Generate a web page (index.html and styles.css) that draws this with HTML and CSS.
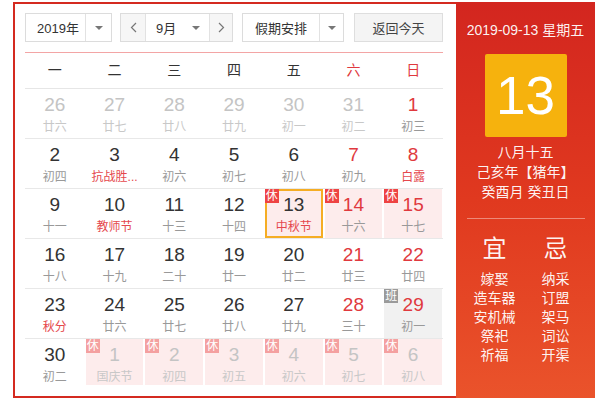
FILE: index.html
```html
<!DOCTYPE html>
<html lang="zh">
<head>
<meta charset="utf-8">
<link rel="stylesheet" href="styles.css">
</head>
<body>
<div class="cal">
  <div class="main">
    <div class="toolbar">
      <div class="sel year"><span class="txt">2019年</span><span class="drop"><i class="tri"></i></span></div>
      <div class="sel month">
        <span class="nav prev"><svg width="7" height="11" viewBox="0 0 7 11"><polyline points="6,1 1.5,5.5 6,10" fill="none" stroke="#777" stroke-width="1.2"/></svg></span>
        <span class="mtxt">9月<i class="tri"></i></span>
        <span class="nav next"><svg width="7" height="11" viewBox="0 0 7 11"><polyline points="1,1 5.5,5.5 1,10" fill="none" stroke="#777" stroke-width="1.2"/></svg></span>
      </div>
      <div class="sel hol"><span class="txt">假期安排</span><span class="drop"><i class="tri"></i></span></div>
      <div class="btn">返回今天</div>
    </div>
    <div class="week">
      <span>一</span><span>二</span><span>三</span><span>四</span><span>五</span><span class="we">六</span><span class="we">日</span>
    </div>
    <div class="row">
      <div class="cell off"><div class="n">26</div><div class="l">廿六</div></div>
      <div class="cell off"><div class="n">27</div><div class="l">廿七</div></div>
      <div class="cell off"><div class="n">28</div><div class="l">廿八</div></div>
      <div class="cell off"><div class="n">29</div><div class="l">廿九</div></div>
      <div class="cell off"><div class="n">30</div><div class="l">初一</div></div>
      <div class="cell off"><div class="n">31</div><div class="l">初二</div></div>
      <div class="cell we"><div class="n">1</div><div class="l">初三</div></div>
    </div>
    <div class="row">
      <div class="cell"><div class="n">2</div><div class="l">初四</div></div>
      <div class="cell"><div class="n">3</div><div class="l fest">抗战胜...</div></div>
      <div class="cell"><div class="n">4</div><div class="l">初六</div></div>
      <div class="cell"><div class="n">5</div><div class="l">初七</div></div>
      <div class="cell"><div class="n">6</div><div class="l">初八</div></div>
      <div class="cell we"><div class="n">7</div><div class="l">初九</div></div>
      <div class="cell we"><div class="n">8</div><div class="l fest">白露</div></div>
    </div>
    <div class="row">
      <div class="cell"><div class="n">9</div><div class="l">十一</div></div>
      <div class="cell"><div class="n">10</div><div class="l fest">教师节</div></div>
      <div class="cell"><div class="n">11</div><div class="l">十三</div></div>
      <div class="cell"><div class="n">12</div><div class="l">十四</div></div>
      <div class="cell rest today"><b class="tag">休</b><div class="n">13</div><div class="l fest">中秋节</div></div>
      <div class="cell rest we"><b class="tag">休</b><div class="n">14</div><div class="l">十六</div></div>
      <div class="cell rest we"><b class="tag">休</b><div class="n">15</div><div class="l">十七</div></div>
    </div>
    <div class="row">
      <div class="cell"><div class="n">16</div><div class="l">十八</div></div>
      <div class="cell"><div class="n">17</div><div class="l">十九</div></div>
      <div class="cell"><div class="n">18</div><div class="l">二十</div></div>
      <div class="cell"><div class="n">19</div><div class="l">廿一</div></div>
      <div class="cell"><div class="n">20</div><div class="l">廿二</div></div>
      <div class="cell we"><div class="n">21</div><div class="l">廿三</div></div>
      <div class="cell we"><div class="n">22</div><div class="l">廿四</div></div>
    </div>
    <div class="row">
      <div class="cell"><div class="n">23</div><div class="l fest">秋分</div></div>
      <div class="cell"><div class="n">24</div><div class="l">廿六</div></div>
      <div class="cell"><div class="n">25</div><div class="l">廿七</div></div>
      <div class="cell"><div class="n">26</div><div class="l">廿八</div></div>
      <div class="cell"><div class="n">27</div><div class="l">廿九</div></div>
      <div class="cell we"><div class="n">28</div><div class="l">三十</div></div>
      <div class="cell work we"><b class="tag">班</b><div class="n">29</div><div class="l">初一</div></div>
    </div>
    <div class="row last">
      <div class="cell"><div class="n">30</div><div class="l">初二</div></div>
      <div class="cell rest off"><b class="tag">休</b><div class="n">1</div><div class="l">国庆节</div></div>
      <div class="cell rest off"><b class="tag">休</b><div class="n">2</div><div class="l">初四</div></div>
      <div class="cell rest off"><b class="tag">休</b><div class="n">3</div><div class="l">初五</div></div>
      <div class="cell rest off"><b class="tag">休</b><div class="n">4</div><div class="l">初六</div></div>
      <div class="cell rest off"><b class="tag">休</b><div class="n">5</div><div class="l">初七</div></div>
      <div class="cell rest off"><b class="tag">休</b><div class="n">6</div><div class="l">初八</div></div>
    </div>
  </div>
  <div class="side">
    <div class="date">2019-09-13 星期五</div>
    <div class="big">13</div>
    <div class="lunar">
      <div>八月十五</div>
      <div>己亥年【猪年】</div>
      <div>癸酉月 癸丑日</div>
    </div>
    <div class="sep"></div>
    <div class="yj">
      <div class="col">
        <div class="h">宜</div>
        <div class="it">嫁娶</div>
        <div class="it">造车器</div>
        <div class="it">安机械</div>
        <div class="it">祭祀</div>
        <div class="it">祈福</div>
      </div>
      <div class="col">
        <div class="h">忌</div>
        <div class="it">纳采</div>
        <div class="it">订盟</div>
        <div class="it">架马</div>
        <div class="it">词讼</div>
        <div class="it">开渠</div>
      </div>
    </div>
  </div>
</div>
</body>
</html>
```
FILE: styles.css
```css
html, body {
  margin: 0;
  padding: 0;
  background: #fff;
}
body {
  font-family: "Liberation Sans", "Noto Sans CJK SC", sans-serif;
  color: #333;
}
.cal {
  display: flex;
  margin: 2px 0 0 13px;
  width: 582px;
  height: 396px;
}
.main {
  width: 443px;
  height: 396px;
  box-sizing: border-box;
  border: 2px solid #d42a20;
  border-right: none;
  padding: 9px 13px 0 10px;
  background: #fff;
}
.toolbar {
  display: flex;
  height: 29px;
  margin-bottom: 10px;
  font-size: 13px;
}
.sel {
  display: flex;
  align-items: stretch;
  box-sizing: border-box;
  height: 29px;
  border: 1px solid #dcdcdc;
  background: #fff;
}
.sel .txt {
  flex: 1;
  display: flex;
  align-items: center;
  color: #333;
}
.drop {
  display: flex;
  align-items: center;
  justify-content: center;
  border-left: 1px solid #e2e2e2;
}
.tri {
  display: inline-block;
  width: 0;
  height: 0;
  border-left: 4px solid transparent;
  border-right: 4px solid transparent;
  border-top: 4px solid #777;
}
.year {
  width: 87px;
}
.year .txt {
  padding-left: 11px;
}
.year .drop {
  width: 25px;
}
.month {
  width: 113px;
  margin-left: 8px;
}
.nav {
  display: flex;
  align-items: center;
  justify-content: center;
  background: #f6f6f6;
}
.prev {
  width: 24px;
  border-right: 1px solid #e2e2e2;
}
.next {
  width: 22px;
  border-left: 1px solid #e2e2e2;
}
.mtxt {
  flex: 1;
  display: flex;
  align-items: center;
  justify-content: space-between;
  padding: 0 9px 0 10px;
}
.hol {
  width: 102px;
  margin-left: 9px;
}
.hol .txt {
  padding-left: 12px;
}
.hol .drop {
  width: 23px;
}
.btn {
  width: 89px;
  margin-left: 10px;
  box-sizing: border-box;
  height: 29px;
  border: 1px solid #dedede;
  background: #f4f4f4;
  color: #444;
  display: flex;
  align-items: center;
  justify-content: center;
}
.week {
  display: grid;
  grid-template-columns: repeat(7, 1fr);
  height: 35px;
  line-height: 35px;
  border-top: 1px solid #f3a5a5;
  border-bottom: 1px solid #e6e6e6;
  font-size: 14px;
  text-align: center;
  color: #333;
}
.week .we {
  color: #e0393e;
}
.row {
  display: grid;
  grid-template-columns: repeat(7, 1fr);
  height: 49px;
  border-bottom: 1px solid #e8e8e8;
}
.row.last {
  border-bottom: none;
  height: 46px;
}
.cell {
  position: relative;
  margin: 0 1px;
  text-align: center;
  padding-top: 6px;
  box-sizing: border-box;
}
.n {
  font-size: 19px;
  line-height: 20px;
  color: #333;
}
.l {
  font-size: 12px;
  line-height: 14px;
  margin-top: 5px;
  color: #999;
  white-space: nowrap;
}
.we .n {
  color: #e0393e;
}
.l.fest {
  color: #e5484d;
}
.off .n {
  color: #c4c4c4;
}
.off .l {
  color: #c8c8c8;
}
.rest {
  background: #fdecec;
}
.work {
  background: #f1f1f1;
}
.today {
  box-shadow: inset 0 0 0 2px #f5ad24;
}
.tag {
  position: absolute;
  left: 0;
  top: 0;
  width: 14px;
  height: 14px;
  line-height: 14px;
  font-size: 12px;
  font-weight: normal;
  color: #fff;
  background: #ee4343;
  text-align: center;
}
.work .tag {
  background: #9a9a9a;
}
.off .tag {
  background: #f4a0a0;
}
.side {
  flex: 1;
  height: 396px;
  background: linear-gradient(180deg, #d3261f 0%, #e0391f 50%, #ea532b 100%);
  color: rgba(255, 255, 255, 0.94);
  text-align: center;
  padding-top: 18px;
  box-sizing: border-box;
}
.date {
  font-size: 14px;
  line-height: 20px;
}
.big {
  width: 82px;
  height: 83px;
  margin: 14px auto 0;
  background: #f6b20d;
  border-radius: 2px;
  color: #fff;
  font-size: 53px;
  line-height: 83px;
}
.lunar {
  margin-top: 5px;
  font-size: 14px;
  line-height: 20px;
}
.sep {
  margin: 16px 10px 0 11px;
  border-top: 1px solid rgba(255, 255, 255, 0.4);
}
.yj {
  display: flex;
  padding-left: 8px;
  margin-top: 15px;
}
.col {
  width: 61px;
}
.h {
  font-size: 24px;
  line-height: 30px;
}
.col .h {
  margin-bottom: 6px;
}
.it {
  font-size: 14px;
  line-height: 19px;
}
```
